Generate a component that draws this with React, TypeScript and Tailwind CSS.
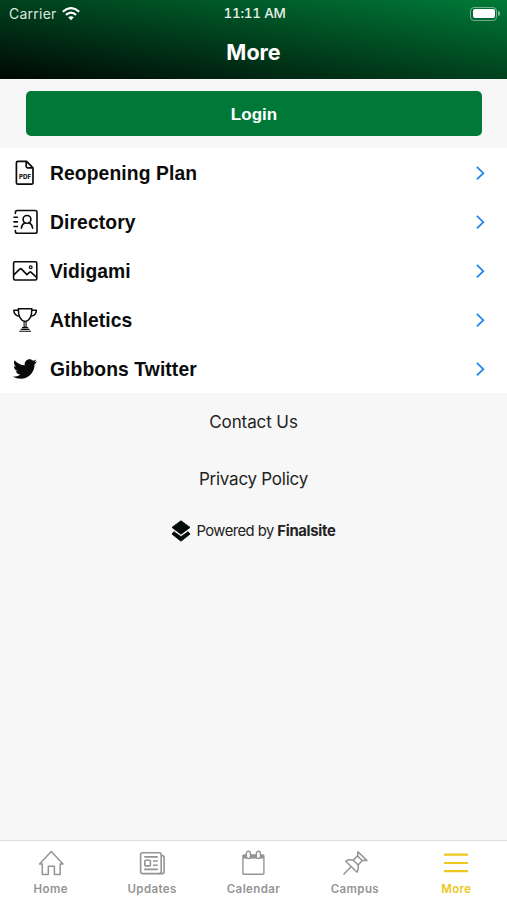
import React from 'react';

type IconProps = { className?: string };

const PdfIcon: React.FC<IconProps> = ({ className }) => (
  <svg viewBox="0 0 26 26" className={className} fill="none" stroke="currentColor" strokeWidth="1.7">
    <path d="M5.8 1.4h8.8l6.4 6.4v15q0 1.4-1.4 1.4H5.8q-1.4 0-1.4-1.4v-20q0-1.4 1.4-1.4z" strokeLinejoin="round" />
    <path d="M14.2 1.6v5q0 1.3 1.3 1.3h5.3" />
    <text
      x="7"
      y="18.9"
      textLength="12"
      lengthAdjust="spacingAndGlyphs"
      fontSize="5.6"
      fontWeight="800"
      fill="currentColor"
      stroke="none"
      fontFamily="Inter, sans-serif"
    >
      PDF
    </text>
  </svg>
);

const DirectoryIcon: React.FC<IconProps> = ({ className }) => (
  <svg viewBox="0 0 26 26" className={className} fill="none" stroke="currentColor" strokeWidth="1.6" strokeLinecap="round">
    <path d="M3.4 4.4V3.4q0-1.9 1.9-1.9h17.8q1.9 0 1.9 1.9v19q0 1.9-1.9 1.9H5.3q-1.9 0-1.9-1.9v-.9" />
    <path d="M2 8.3h3.4M2 12.9h3.4M2 17.5h3.4" />
    <circle cx="15" cy="10.4" r="3.9" />
    <path d="M9.4 19.2q.3-4 3.6-5.5M17 13.7q3.3 1.5 3.6 5.5" />
  </svg>
);

const PhotoIcon: React.FC<IconProps> = ({ className }) => (
  <svg viewBox="0 0 26 26" className={className} fill="none" stroke="currentColor" strokeWidth="1.6" strokeLinejoin="round">
    <rect x="1.6" y="3.7" width="23.2" height="18.3" rx="1.4" />
    <path d="M1.8 16.8l6.3-6q.6-.5 1.2.1l5.6 5.7 2.8-2.5q.6-.5 1.2 0l5.7 5.2" />
    <circle cx="18.7" cy="9.2" r="1.4" strokeWidth="1.2" />
  </svg>
);

const TrophyIcon: React.FC<IconProps> = ({ className }) => (
  <svg viewBox="0 0 26 26" className={className} fill="none" stroke="currentColor" strokeWidth="1.5" strokeLinejoin="round">
    <path d="M6.3 1.8h13.6c0 8-2.1 12-6.8 12.7-4.7-.7-6.8-4.7-6.8-12.7z" />
    <path d="M6.3 3.3H1.8c.2 3.8 2.3 5.7 5.6 6M19.9 3.3h4.500c-.2 3.8-2.300 5.700-5.600 6" />
    <path d="M12.1 14.5h2v5.500h-2zM10 20.6h6.200M7.200 24.200h11.800M8.700 22.400h8.800" strokeWidth="1.1" />
  </svg>
);

const TwitterIcon: React.FC<IconProps> = ({ className }) => (
  <svg viewBox="0 0 24 24" className={className} fill="currentColor">
    <path d="M23.954 4.569c-.885.389-1.830.654-2.825.775 1.014-.611 1.794-1.574 2.163-2.723-.951.555-2.005.959-3.127 1.184-.896-.959-2.173-1.559-3.591-1.559-2.717 0-4.920 2.203-4.920 4.917 0 .390.045.765.127 1.124C7.691 8.094 4.066 6.130 1.640 3.161c-.427.722-.666 1.561-.666 2.475 0 1.710.870 3.213 2.188 4.096-.807-.026-1.566-.248-2.228-.616v.061c0 2.385 1.693 4.374 3.946 4.827-.413.111-.849.171-1.296.171-.314 0-.615-.030-.916-.086.631 1.953 2.445 3.377 4.604 3.417-1.680 1.319-3.809 2.105-6.102 2.105-.390 0-.779-.023-1.170-.067 2.189 1.394 4.768 2.209 7.557 2.209 9.054 0 13.999-7.496 13.999-13.986 0-.209 0-.420-.015-.630.961-.689 1.800-1.560 2.460-2.548z" />
  </svg>
);

const ChevronIcon: React.FC<IconProps> = ({ className }) => (
  <svg viewBox="0 0 10 16" className={className} fill="none" stroke="currentColor" strokeWidth="1.8">
    <path d="M.9 1.800L7.300 8.200l-6.400 6.200" />
  </svg>
);

const HomeIcon: React.FC<IconProps> = ({ className }) => (
  <svg viewBox="0 0 26 26" className={className} fill="none" stroke="currentColor" strokeWidth="1.5" strokeLinejoin="round">
    <path d="M1.5 14L13.3 1.500 25 14h-2.800v10.600h-5.800v-8.400h-6.100v8.400H4.300V14z" />
  </svg>
);

const UpdatesIcon: React.FC<IconProps> = ({ className }) => (
  <svg viewBox="0 0 26 26" className={className} fill="none" stroke="currentColor" strokeWidth="1.6">
    <rect x="1.6" y="2.8" width="20.6" height="20.8" rx="2" />
    <path d="M22.2 5.600h1q1.900 0 1.900 1.900v14.200q0 1.900-1.900 1.900h-3" />
    <path d="M5.2 6.900h13.600M5.200 19.400h13.600M14 11h4.800M14 15.200h4.800" />
    <rect x="5.8" y="10.3" width="5.6" height="5.6" rx="1" />
  </svg>
);

const CalendarIcon: React.FC<IconProps> = ({ className }) => (
  <svg viewBox="0 0 26 26" className={className} fill="none" stroke="currentColor" strokeWidth="1.4">
    <rect x="2.9" y="5" width="21" height="19.3" rx="1" />
    <path d="M2.9 5h21v3.600h-21z" fill="currentColor" stroke="none" />
    <rect x="6.4" y="1.3" width="4" height="7.3" rx="2" fill="white" />
    <rect x="16.4" y="1.3" width="4" height="7.3" rx="2" fill="white" />
  </svg>
);

const PinIcon: React.FC<IconProps> = ({ className }) => (
  <svg viewBox="0 0 26 26" className={className} fill="none" stroke="currentColor" strokeWidth="1.5" strokeLinejoin="round">
    <path d="M15.9 1.700l8.900 8.700-4.600.2-4 4.400q.5 4.200-1.100 7.200L3.700 11.200q3.200-2 7.500-1l4.400-4.300z" />
    <path d="M15.6 5.900l4.600 4.700M11.200 10.200l5 4.800M9 16.800L1.500 24.500" />
  </svg>
);

const MenuIcon: React.FC<IconProps> = ({ className }) => (
  <svg viewBox="0 0 26 26" className={className} fill="none" stroke="currentColor" strokeWidth="2.2">
    <path d="M1 4.700h24M1 13h24M1 21.200h24" />
  </svg>
);

const WifiIcon: React.FC<IconProps> = ({ className }) => (
  <svg viewBox="0 0 18 14" className={className} fill="none" stroke="currentColor" strokeWidth="2.2">
    <path d="M.8 4.800Q9-2.600 17.200 4.800M3.900 7.900q5.100-4.500 10.200 0" />
    <path d="M6.2 10.300Q9 8 11.800 10.300L9 13.200z" fill="currentColor" stroke="none" />
  </svg>
);

const FinalsiteLogo: React.FC<IconProps> = ({ className }) => (
  <svg viewBox="0 0 20 22" className={className} fill="currentColor" stroke="currentColor" strokeWidth="0.9" strokeLinejoin="round">
    <path d="M10 .8l9 6.600L10 14.200 1 7.400z" />
    <path d="M2.900 11.700L10 16.700l7.100-5 1.900 2.400L10 21.200l-9-7.100z" />
  </svg>
);

const links = [
  { label: 'Reopening Plan', Icon: PdfIcon, iconSize: 'size-[26px]' },
  { label: 'Directory', Icon: DirectoryIcon, iconSize: 'size-[26px]' },
  { label: 'Vidigami', Icon: PhotoIcon, iconSize: 'size-[26px]' },
  { label: 'Athletics', Icon: TrophyIcon, iconSize: 'size-[26px]' },
  { label: 'Gibbons Twitter', Icon: TwitterIcon, iconSize: 'size-[24px]' },
];

const tabs = [
  { label: 'Home', Icon: HomeIcon },
  { label: 'Updates', Icon: UpdatesIcon },
  { label: 'Calendar', Icon: CalendarIcon },
  { label: 'Campus', Icon: PinIcon },
  { label: 'More', Icon: MenuIcon },
];

const App: React.FC = () => {
  const activeTab = 'More';

  return (
    <div className="flex h-[900px] w-[507px] flex-col overflow-hidden bg-[#f7f7f7] font-['Inter',sans-serif]">
      <header className="h-[79px] shrink-0 bg-[linear-gradient(to_bottom_left,#007a38,#000803)] text-white">
        {/* Status bar */}
        <div className="grid h-[27px] grid-cols-3 items-center pr-[7px] pl-[9px] text-[14px] leading-none">
          <div className="flex items-center gap-[5px] text-[#dce8df]">
            <span className="tracking-[0.25px]">Carrier</span>
            <WifiIcon className="h-[14px] w-[18px] text-white" />
          </div>
          <div className="pt-px text-center text-[13.5px] font-medium tracking-[-0.25px] text-[#e6f0e8] tabular-nums">11:11 AM</div>
          <div className="flex items-center justify-end gap-px">
            <div className="h-[14px] w-[27px] rounded-[4px] border border-white/45 p-[1.5px]">
              <div className="h-full rounded-[2px] bg-white" />
            </div>
            <div className="h-[5px] w-[2px] rounded-r-full bg-white/50" />
          </div>
        </div>
        <h1 className="text-center text-[21.5px] leading-[50px] font-bold">More</h1>
      </header>

      <main className="flex-1">
        <div className="h-[69px] pt-3 pr-[25px] pl-[26px]">
          <button className="h-[45px] w-full rounded-[5px] bg-[#007938] pt-[3px] font-['Liberation_Sans',sans-serif] text-[17px] font-bold text-white">
            Login
          </button>
        </div>

        <ul className="bg-white text-[#0b0b0b]">
          {links.map(({ label, Icon, iconSize }) => (
            <li key={label} className="flex h-[49px] items-center pr-[21px] pl-[12px]">
              <div className="flex w-[26px] justify-center">
                <Icon className={iconSize} />
              </div>
              <span className="ml-3 flex-1 pt-[2px] font-['Liberation_Sans',sans-serif] text-[19.3px] leading-[24px] font-bold tracking-[0.1px]">
                {label}
              </span>
              <ChevronIcon className="h-4 w-[10px] text-[#2188ea]" />
            </li>
          ))}
        </ul>

        <div className="flex flex-col items-center text-[#222]">
          <a className="mt-[15px] text-[17px] leading-[28px] tracking-[-0.1px]">Contact Us</a>
          <a className="mt-[29px] text-[17px] leading-[28px] tracking-[-0.25px]">Privacy Policy</a>
          <div className="mt-[27px] flex items-center gap-[5px] text-[14.8px] leading-[22px]">
            <FinalsiteLogo className="h-[22px] w-[20px] text-[#030b06]" />
            <span className="tracking-[-0.55px]">
              Powered by <b className="font-bold tracking-[-0.3px]">Finalsite</b>
            </span>
          </div>
        </div>
      </main>

      <nav className="grid h-[60px] shrink-0 grid-cols-5 border-t border-[#dedede] bg-white">
        {tabs.map(({ label, Icon }) => (
          <div
            key={label}
            className={`flex flex-col items-center pt-[9px] ${label === activeTab ? 'text-[#ebc720]' : 'text-[#949494]'}`}
          >
            <Icon className="size-[26px]" />
            <span className="mt-[6px] text-[11.5px] leading-[14px] font-semibold tracking-[0.4px]">{label}</span>
          </div>
        ))}
      </nav>
    </div>
  );
};

export default App;
